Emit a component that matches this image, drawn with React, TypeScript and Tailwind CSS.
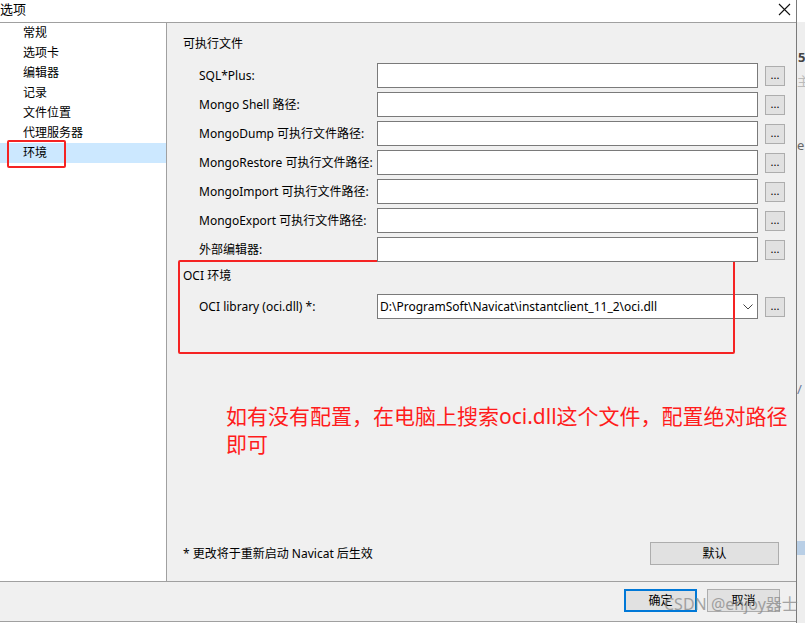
import React from 'react';

const font = { fontFamily: '"Noto Sans", "Noto Sans CJK SC", sans-serif' };

const navItems = ['常规', '选项卡', '编辑器', '记录', '文件位置', '代理服务器', '环境'];

const pathRows = [
  'SQL*Plus:',
  'Mongo Shell 路径:',
  'MongoDump 可执行文件路径:',
  'MongoRestore 可执行文件路径:',
  'MongoImport 可执行文件路径:',
  'MongoExport 可执行文件路径:',
  '外部编辑器:',
];

const BrowseButton: React.FC = () => (
  <button className="ml-[7px] shrink-0 w-[20px] h-[20px] border border-[#adadad] bg-[#e1e1e1] text-[11px] leading-none text-black flex items-end justify-center pb-[5px]">
    ...
  </button>
);

const PathRow: React.FC<{ label: string }> = ({ label }) => (
  <div className="flex items-center h-[25px] mb-[4px]">
    <div className="w-[194px] shrink-0 pl-[16px] whitespace-nowrap text-[12px] leading-[16px] text-black overflow-visible relative z-0">
      {label}
    </div>
    <div className="relative z-10 shrink-0 w-[381px] h-[25px] border border-[#7a7a7a] bg-white" />
    <BrowseButton />
  </div>
);

export default function App() {
  return (
    <div className="w-[805px] h-[623px] flex bg-white overflow-hidden" style={font}>
      {/* dialog */}
      <div className="w-[797px] h-[623px] flex flex-col border-r border-[#7a7a7a] shrink-0">
        {/* title */}
        <div className="h-[23px] shrink-0 flex items-start justify-between bg-white border-b border-[#a0a0a0]">
          <span className="text-[13px] leading-[16px] pt-[1px] text-black">选项</span>
          <svg className="mr-[5px] mt-[3px]" width="13" height="13" viewBox="0 0 13 13">
            <path d="M1 1 L12 12 M12 1 L1 12" stroke="#111" strokeWidth="1.1" fill="none" />
          </svg>
        </div>

        {/* body */}
        <div className="h-[558px] shrink-0 flex">
          {/* nav */}
          <div className="w-[167px] shrink-0 bg-white border-r border-[#a0a0a0] relative">
            {navItems.map((item, i) => (
              <div
                key={item}
                className={`h-[20px] flex items-center pl-[23px] text-[12px] text-black ${
                  i === navItems.length - 1 ? 'bg-[#cce8ff]' : ''
                }`}
              >
                {item}
              </div>
            ))}
            <div className="absolute left-[7px] top-[117px] w-[59px] h-[28px] border-2 border-[#f52323] rounded-[2px]" />
          </div>

          {/* content */}
          <div className="flex-1 bg-[#f0f0f0] flex flex-col pl-[16px] pt-[13px] relative">
            <div className="text-[12px] leading-[16px] text-black">可执行文件</div>
            <div className="mt-[11px]">
              {pathRows.map((r) => (
                <PathRow key={r} label={r} />
              ))}
            </div>

            <div className="mt-[2px] text-[12px] leading-[16px] text-black">OCI 环境</div>
            <div className="mt-[10px] flex items-center h-[25px]">
              <div className="w-[194px] shrink-0 pl-[16px] whitespace-nowrap text-[12px] leading-[16px] text-black">
                OCI library (oci.dll) *:
              </div>
              <div className="w-[381px] shrink-0 h-[25px] border border-[#7a7a7a] bg-white flex items-center justify-between pl-[2px] pr-[4px]">
                <span className="text-[12px] leading-[16px] text-black whitespace-nowrap">
                  D:\ProgramSoft\Navicat\instantclient_11_2\oci.dll
                </span>
                <svg width="10" height="6" viewBox="0 0 10 6">
                  <path d="M0.5 0.5 L5 5 L9.5 0.5" stroke="#444" strokeWidth="1" fill="none" />
                </svg>
              </div>
              <BrowseButton />
            </div>

            {/* annotation */}
            <div className="absolute left-[11px] top-[237px] w-[557px] h-[94px] border-2 border-[#f52323] rounded-[2px] pointer-events-none" />

            <div className="mt-[83px] ml-[43px] text-[21px] leading-[28px] text-[#ff1c1c] whitespace-nowrap">
              如有没有配置，在电脑上搜索oci.dll这个文件，配置绝对路径
              <br />
              即可
            </div>

            <div className="flex-1" />

            <div className="flex items-center justify-between pr-[17px] pb-[16px]">
              <span className="text-[12px] leading-[16px] text-black">* 更改将于重新启动 Navicat 后生效</span>
              <button className="w-[129px] h-[23px] border border-[#adadad] bg-[#e1e1e1] text-[12px] text-black">
                默认
              </button>
            </div>
          </div>
        </div>

        {/* bottom bar */}
        <div className="h-[41px] shrink-0 bg-[#f0f0f0] border-t border-[#a0a0a0] border-b flex justify-end items-start gap-[10px] pt-[7px] pr-[16px] relative">
          <button className="w-[73px] h-[23px] border-2 border-[#0078d7] bg-[#e1e1e1] text-[12px] text-black">
            确定
          </button>
          <button className="w-[73px] h-[23px] border border-[#adadad] bg-[#e1e1e1] text-[12px] text-black">
            取消
          </button>
          <span className="absolute left-[664px] top-[12px] text-[16px] leading-[20px] text-[#8a8a8a] opacity-75 whitespace-nowrap pointer-events-none">
            CSDN @enjoy器士
          </span>
        </div>
      </div>

      {/* background strip behind the dialog */}
      <div className="flex-1 bg-[#eeeeee] flex flex-col text-[13px] leading-[14px] text-[#555] overflow-hidden">
        <div className="h-[22px] bg-white" />
        <div className="mt-[28px] pl-[1px] font-bold text-[#444]">5</div>
        <div className="mt-[10px] text-[#bbb]">主</div>
        <div className="mt-[50px] text-[#666]">e</div>
        <div className="mt-[230px] text-[#6a7a9a]">/</div>
        <div className="mt-[145px] h-[14px] bg-[#b9cfe6]" />
      </div>
    </div>
  );
}
